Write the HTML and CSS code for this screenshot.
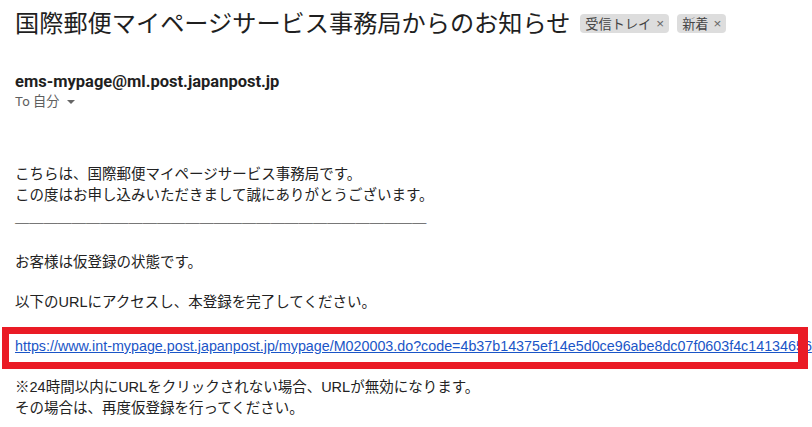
FILE: index.html
```html
<!DOCTYPE html>
<html lang="ja">
<head>
<meta charset="utf-8">
<title>国際郵便マイページサービス事務局からのお知らせ</title>
<link rel="stylesheet" href="styles.css">
</head>
<body>
<div class="page">
  <div class="subject-row">
    <h2 class="subject">国際郵便マイページサービス事務局からのお知らせ</h2>
    <span class="tag">受信トレイ<span class="x">×</span></span>
    <span class="tag">新着<span class="x">×</span></span>
  </div>
  <div class="sender">ems-mypage@ml.post.japanpost.jp</div>
  <div class="to">To 自分 <span class="caret"></span></div>

  <div class="body">
    <p class="para first">こちらは、国際郵便マイページサービス事務局です。<br>この度はお申し込みいただきまして誠にありがとうございます。</p>
    <p class="para rule">＿＿＿＿＿＿＿＿＿＿＿＿＿＿＿＿＿＿＿＿＿＿＿＿＿＿＿＿＿</p>
    <p class="para g25">お客様は仮登録の状態です。</p>
    <p class="para g19">以下のURLにアクセスし、本登録を完了してください。</p>
    <p class="para g23 link-line"><a class="link" href="#">https://www.int-mypage.post.japanpost.jp/mypage/M020003.do?code=4b37b14375ef14e5d0ce96abe8dc07f0603f4c14134656</a><span class="highlight"></span></p>
    <p class="para g20">※24時間以内にURLをクリックされない場合、URLが無効になります。<br>その場合は、再度仮登録を行ってください。</p>
  </div>
</div>
</body>
</html>
```

FILE: styles.css
```css
html, body {
  margin: 0;
  padding: 0;
  background: #ffffff;
  overflow: hidden;
}

.page {
  width: 812px;
  height: 427px;
  padding: 0 0 0 15px;
  box-sizing: border-box;
  overflow: hidden;
  position: relative;
  font-family: "Liberation Sans", "Noto Sans CJK JP", sans-serif;
  color: #222222;
}

.subject-row {
  display: flex;
  align-items: center;
  margin-top: 8px;
  height: 28px;
}

.subject {
  margin: 0;
  font-family: "Noto Sans CJK JP", sans-serif;
  font-weight: 400;
  font-size: 24.2px;
  line-height: 28px;
  color: #1f1f1f;
  white-space: nowrap;
  margin-right: 10px;
}

.tag {
  display: inline-flex;
  align-items: center;
  height: 19px;
  padding: 0 5px 0 5px;
  margin-right: 8px;
  margin-top: 3px;
  background: #dddddd;
  border-radius: 4px;
  font-family: "Noto Sans CJK JP", sans-serif;
  font-size: 13.2px;
  color: #444444;
  white-space: nowrap;
}

.tag .x {
  font-family: "Liberation Sans", sans-serif;
  font-size: 13.5px;
  color: #666666;
  margin-left: 5px;
}

.sender {
  margin-top: 36px;
  font-family: Roboto, "Liberation Sans", sans-serif;
  font-weight: 700;
  font-size: 16.5px;
  line-height: 20px;
  color: #1f1f1f;
}

.to {
  display: flex;
  align-items: center;
  gap: 5px;
  font-family: Roboto, "Noto Sans CJK JP", sans-serif;
  font-size: 13.2px;
  line-height: 18px;
  color: #5e5e5e;
  margin-top: 1px;
}

.caret {
  width: 0;
  height: 0;
  border-left: 4px solid transparent;
  border-right: 4px solid transparent;
  border-top: 4px solid #666666;
  margin-left: 3px;
}

.body {
  margin-top: 53px;
  font-size: 14.5px;
  line-height: 21px;
}

.para {
  margin: 0;
  white-space: nowrap;
}

.rule {
  font-family: "Noto Sans CJK JP", sans-serif;
  font-size: 14.2px;
  color: #000000;
}

.g25 { margin-top: 25px; }
.g19 { margin-top: 19px; }
.g23 { margin-top: 23px; }
.g20 { margin-top: 20px; }

.link-line {
  position: relative;
}

.link {
  font-family: "Liberation Sans", sans-serif;
  font-size: 14.3px;
  color: #1a55c7;
  text-decoration: underline;
}

.highlight {
  position: absolute;
  left: -13px;
  top: -9px;
  width: 806px;
  height: 42px;
  box-sizing: border-box;
  border: 7px solid #ea1b25;
  border-right-width: 10px;
}
```
